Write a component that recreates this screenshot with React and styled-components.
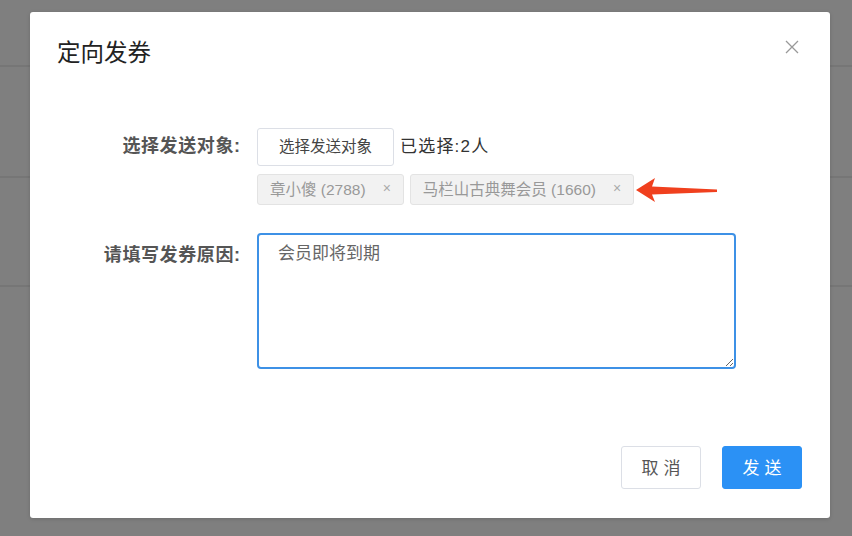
import React from 'react';
import styled, { createGlobalStyle } from 'styled-components';

const GlobalStyle = createGlobalStyle`
    html, body {
        margin: 0;
        padding: 0;
        background: #7f7f7f;
        font-family: 'Liberation Sans', 'Noto Sans CJK SC', sans-serif;
    }
`;

const Screen = styled.div`
    position: relative;
    width: 852px;
    height: 536px;
    overflow: hidden;
    background: #7f7f7f;
`;

const BackRow = styled.div`
    height: ${p => p.h}px;
    border-bottom: 2px solid #767676;
`;

const Modal = styled.div`
    position: absolute;
    top: 12px;
    left: 30px;
    width: 800px;
    height: 506px;
    background: #fff;
    border-radius: 3px;
    display: flex;
    flex-direction: column;
    box-shadow: 0 1px 4px rgba(0,0,0,0.15);
`;

const Header = styled.div`
    display: flex;
    justify-content: space-between;
    align-items: center;
    padding: 24px 31px 2px 27px;
    height: 30px;
`;

const Title = styled.h3`
    margin: 0;
    font-size: 23.5px;
    font-weight: 400;
    color: #222;
`;

const Close = styled.button`
    border: none;
    background: none;
    padding: 0;
    margin-top: -8px;
    cursor: pointer;
    display: flex;
`;

const Form = styled.div`
    display: grid;
    grid-template-columns: 210px 1fr;
    column-gap: 17px;
    row-gap: 28px;
    padding-top: 60px;
`;

const Label = styled.div`
    text-align: right;
    font-size: 18px;
    font-weight: 700;
    letter-spacing: 0.6px;
    margin-right: -0.6px;
    color: #555;
    padding-top: ${p => p.top}px;
`;

const Field = styled.div`
    display: flex;
    flex-direction: column;
    gap: 8px;
`;

const Line = styled.div`
    display: flex;
    align-items: center;
    gap: ${p => p.gap || 6}px;
`;

const PlainButton = styled.button`
    height: 38px;
    padding: 0 21px 4px;
    border: 1px solid #dcdfe6;
    border-radius: 3px;
    background: #fff;
    font-family: inherit;
    font-size: 15.5px;
    color: #444;
`;

const Counter = styled.span`
    font-size: 17px;
    letter-spacing: 1.2px;
    color: #333;
    padding-bottom: 5px;
`;

const Tag = styled.span`
    display: inline-flex;
    align-items: center;
    box-sizing: border-box;
    height: 31px;
    padding: 0 12px 3px;
    background: #f2f2f2;
    border: 1px solid #e3e3e3;
    border-radius: 3px;
    font-size: 15.5px;
    color: #999;
    gap: 17px;
`;

const TagClose = styled.span`
    font-size: 14px;
    color: #aaa;
`;

const Reason = styled.textarea`
    width: 479px;
    height: 136px;
    box-sizing: border-box;
    border: 2px solid #3d91e6;
    border-radius: 4px;
    padding: 4px 19px;
    font-family: inherit;
    font-size: 17px;
    color: #666;
    outline: none;
    resize: both;
`;

const Footer = styled.div`
    margin-top: auto;
    display: flex;
    justify-content: flex-end;
    gap: 21px;
    padding: 0 28px 29px 0;
`;

const ActionButton = styled.button`
    width: 80px;
    height: 43px;
    border-radius: 3px;
    font-family: inherit;
    font-size: 17px;
    letter-spacing: 5px;
    padding: 0 0 2px 5px;
    border: 1px solid ${p => (p.primary ? '#2b91f5' : '#dcdfe6')};
    background: ${p => (p.primary ? '#2b91f5' : '#fff')};
    color: ${p => (p.primary ? '#fff' : '#555')};
`;

const ArrowMark = styled.svg`
    margin-left: -4px;
    flex: none;
`;

const Arrow = () => (
    <ArrowMark width="82" height="30" viewBox="0 0 82 30">
        <polygon
            points="0,15 19,3 16,11.5 81,14.5 81,17 16,19.5 19,27"
            fill="#f0401e"
        />
    </ArrowMark>
);

const App = () => (
    <Screen>
        <GlobalStyle />
        <BackRow h={65} />
        <BackRow h={109} />
        <BackRow h={107} />
        <Modal>
            <Header>
                <Title>定向发券</Title>
                <Close>
                    <svg width="14" height="14" viewBox="0 0 14 14">
                        <path d="M1 1L13 13M13 1L1 13" stroke="#999" strokeWidth="1.3" />
                    </svg>
                </Close>
            </Header>
            <Form>
                <Label top={3}>选择发送对象:</Label>
                <Field>
                    <Line gap={6}>
                        <PlainButton>选择发送对象</PlainButton>
                        <Counter>已选择:2人</Counter>
                    </Line>
                    <Line gap={6}>
                        <Tag>章小傻 (2788)<TagClose>×</TagClose></Tag>
                        <Tag>马栏山古典舞会员 (1660)<TagClose>×</TagClose></Tag>
                        <Arrow />
                    </Line>
                </Field>
                <Label top={7}>请填写发券原因:</Label>
                <Field>
                    <Reason defaultValue="会员即将到期" />
                </Field>
            </Form>
            <Footer>
                <ActionButton>取消</ActionButton>
                <ActionButton primary>发送</ActionButton>
            </Footer>
        </Modal>
    </Screen>
);

export default App;
